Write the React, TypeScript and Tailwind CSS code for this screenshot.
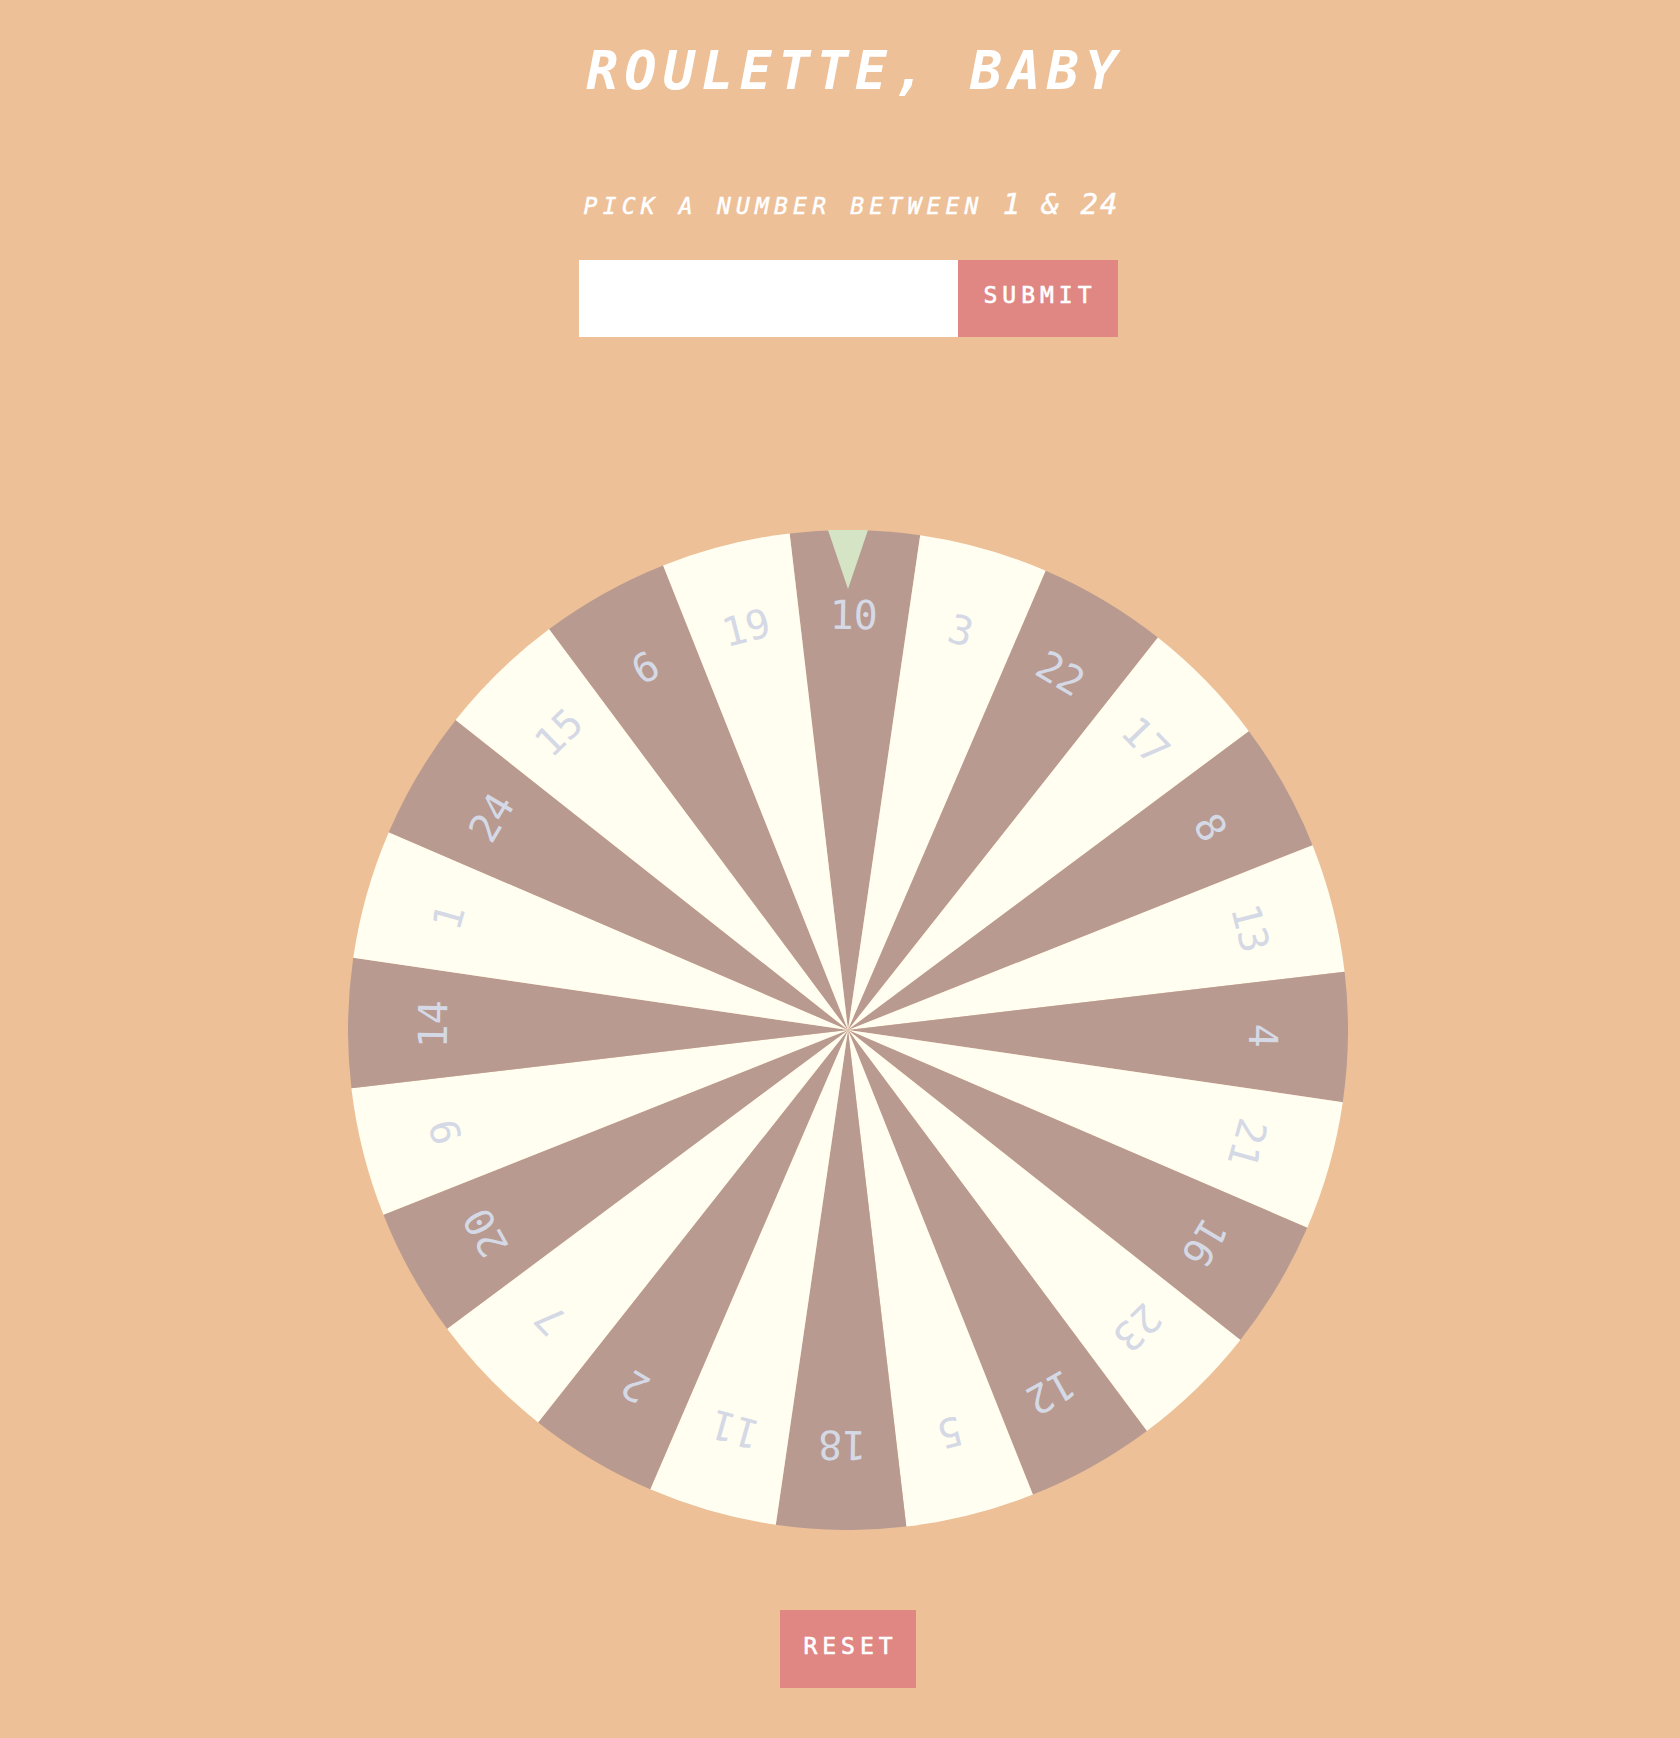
import { useState } from "react";

const numbers = [10, 3, 22, 17, 8, 13, 4, 21, 16, 23, 12, 5, 18, 11, 2, 7, 20, 9, 14, 1, 24, 15, 6, 19];

const mono = "font-['DejaVu_Sans_Mono',monospace]";

function Wheel() {
  const r = 500;
  const c = 500;
  const offset = 0.8;

  return (
    <svg width="1000" height="1000" viewBox="0 0 1000 1000" className="block">
      {numbers.map((n, i) => {
        const a0 = ((offset - 7.5 + i * 15) * Math.PI) / 180;
        const a1 = ((offset + 7.5 + i * 15) * Math.PI) / 180;
        const x0 = c + r * Math.sin(a0);
        const y0 = c - r * Math.cos(a0);
        const x1 = c + r * Math.sin(a1);
        const y1 = c - r * Math.cos(a1);
        return (
          <path
            key={n}
            d={`M${c} ${c} L${x0} ${y0} A${r} ${r} 0 0 1 ${x1} ${y1} Z`}
            fill={i % 2 === 0 ? "#b89a90" : "#fffef1"}
          />
        );
      })}
      {numbers.map((n, i) => (
        <text
          key={"t" + n}
          x={c}
          y={c - 415}
          transform={`rotate(${offset + i * 15} ${c} ${c})`}
          textAnchor="middle"
          dominantBaseline="central"
          fontFamily="'DejaVu Sans Mono', monospace"
          fontSize="40"
          fill="#d4d9e5"
        >
          {n}
        </text>
      ))}
      <polygon points="480,0 520,0 500,59" fill="#d5e4c4" />
    </svg>
  );
}

export default function App() {
  const [guess, setGuess] = useState("");

  return (
    <div className={`min-h-[1738px] bg-[#edc098] pl-4 flex flex-col items-center text-white ${mono}`}>
      <h1 className="mt-[44px] pl-[14px] text-[53px] leading-none font-bold italic tracking-[6.5px]">
        ROULETTE, BABY
      </h1>

      <p className="mt-[92px] pl-[7px] text-[29px] leading-[30px] italic [-webkit-text-stroke:0.5px_white]">
        <span className="text-[23px] tracking-[5.2px]">PICK A NUMBER BETWEEN </span>
        <span className="tracking-[2px]">1 &amp; 24</span>
      </p>

      <form
        className="mt-[39px] flex"
        onSubmit={(e) => {
          e.preventDefault();
        }}
      >
        <input
          value={guess}
          onChange={(e) => setGuess(e.target.value)}
          className="w-[379px] h-[77px] bg-white text-black text-2xl px-4 outline-none"
        />
        <button
          type="submit"
          className="w-[160px] h-[77px] bg-[#e08683] text-[23px] tracking-[5px] pl-[5px] pb-[6px] [-webkit-text-stroke:0.6px_white]"
        >
          SUBMIT
        </button>
      </form>

      <div className="mt-[193px]">
        <Wheel />
      </div>

      <button className="mt-[80px] w-[136px] h-[78px] bg-[#e08683] text-[23px] tracking-[5px] pl-[5px] pb-[6px] [-webkit-text-stroke:0.6px_white]">
        RESET
      </button>
    </div>
  );
}
